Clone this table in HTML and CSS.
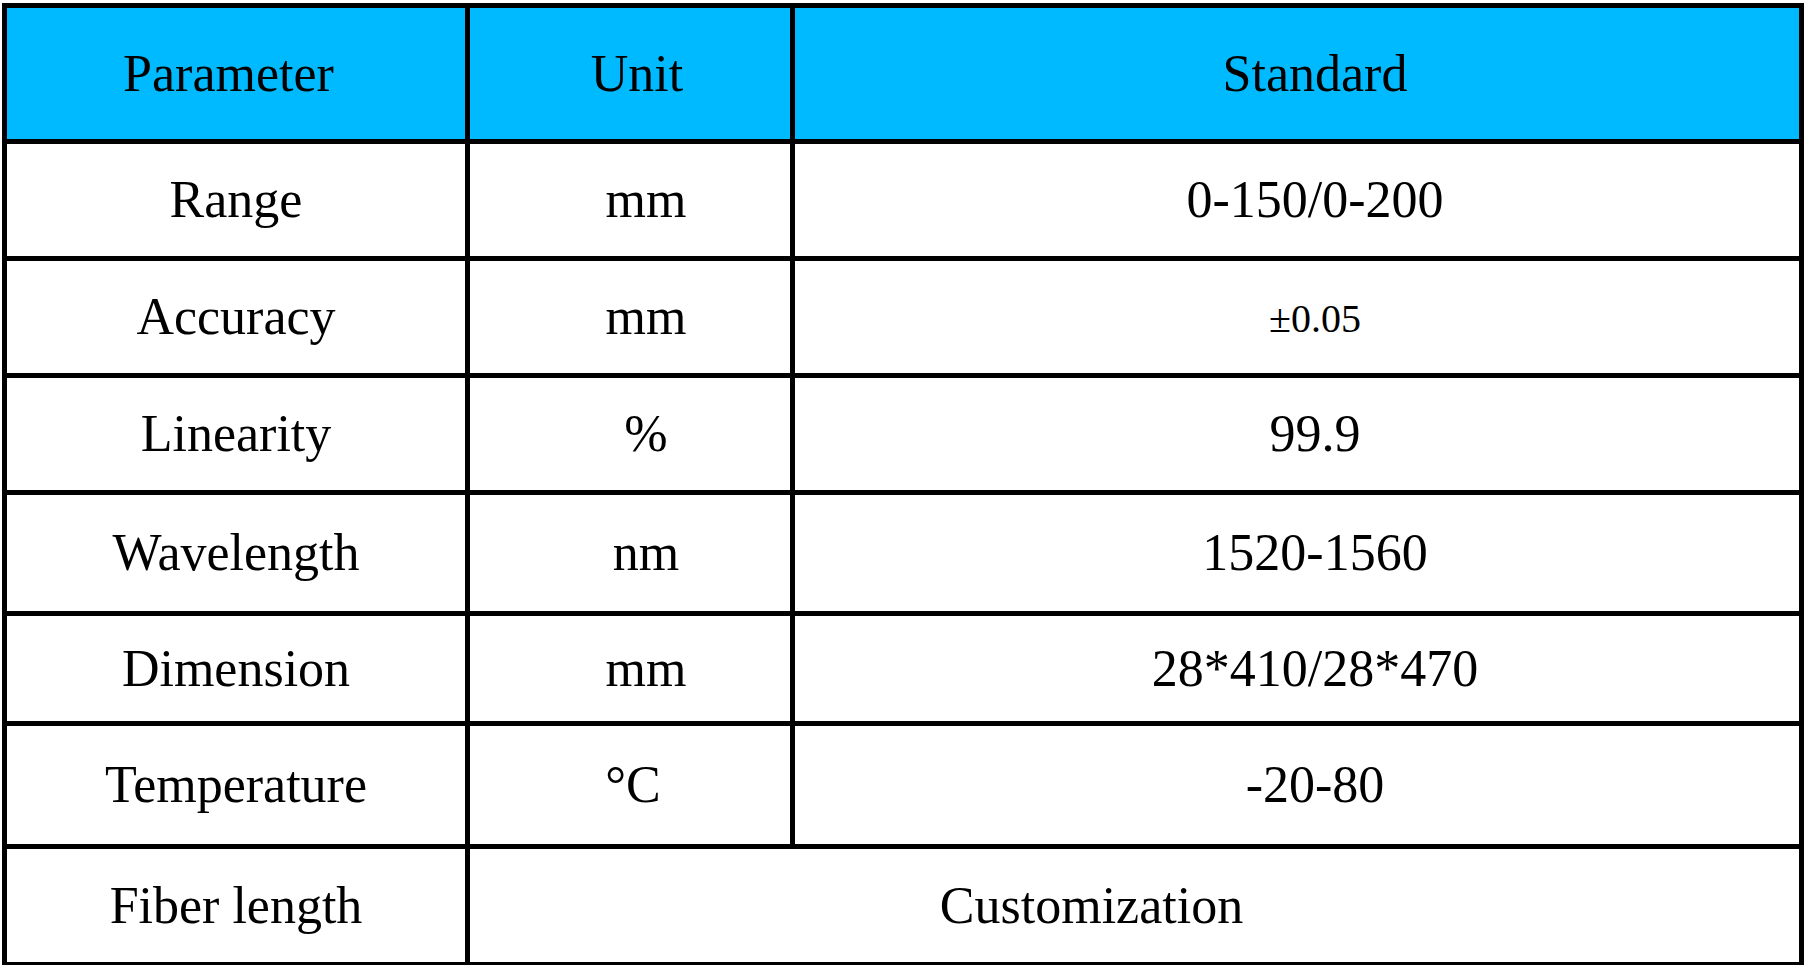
FILE: index.html
```html
<!DOCTYPE html>
<html lang="en">
<head>
<meta charset="utf-8">
<title>Specifications</title>
<link rel="stylesheet" href="styles.css">
</head>
<body>
<div class="spec">
  <div class="cell head c1">Parameter</div>
  <div class="cell head c2">Unit</div>
  <div class="cell head c3">Standard</div>

  <div class="cell c1">Range</div>
  <div class="cell c2 unit">mm</div>
  <div class="cell c3">0-150/0-200</div>

  <div class="cell c1">Accuracy</div>
  <div class="cell c2 unit">mm</div>
  <div class="cell c3 small">±0.05</div>

  <div class="cell c1">Linearity</div>
  <div class="cell c2 unit">%</div>
  <div class="cell c3">99.9</div>

  <div class="cell c1">Wavelength</div>
  <div class="cell c2 unit">nm</div>
  <div class="cell c3">1520-1560</div>

  <div class="cell c1">Dimension</div>
  <div class="cell c2 unit">mm</div>
  <div class="cell c3">28*410/28*470</div>

  <div class="cell c1">Temperature</div>
  <div class="cell c2 unit deg">°C</div>
  <div class="cell c3">-20-80</div>

  <div class="cell c1">Fiber length</div>
  <div class="cell wide">Customization</div>
</div>
</body>
</html>
```

FILE: styles.css
```css
html, body {
  margin: 0;
  padding: 0;
  background: #ffffff;
}

body {
  padding: 3px 0 0 2px;
  font-family: "Liberation Serif", "Times New Roman", serif;
  color: #000000;
}

.spec {
  display: grid;
  width: 1802px;
  box-sizing: border-box;
  padding: 5px;
  gap: 5px;
  background: #000000;
  grid-template-columns: 458px 320px 1004px;
  grid-template-rows: 131px 112px 112px 112px 116px 105px 118px 113px;
}

.cell {
  background: #ffffff;
  display: flex;
  align-items: center;
  justify-content: center;
  font-size: 52px;
  line-height: 1;
  box-sizing: border-box;
  white-space: nowrap;
}

.head {
  background: #00baff;
}

.head.c1 {
  padding-right: 15px;
}

.head.c2 {
  padding-left: 14px;
}

.unit {
  padding-left: 32px;
}

.unit.deg {
  padding-left: 6px;
}

.c3 {
  padding-left: 36px;
}

.c3.small {
  font-size: 40px;
  padding-top: 4px;
}

.wide {
  grid-column: 2 / 4;
  padding-right: 86px;
}
```
